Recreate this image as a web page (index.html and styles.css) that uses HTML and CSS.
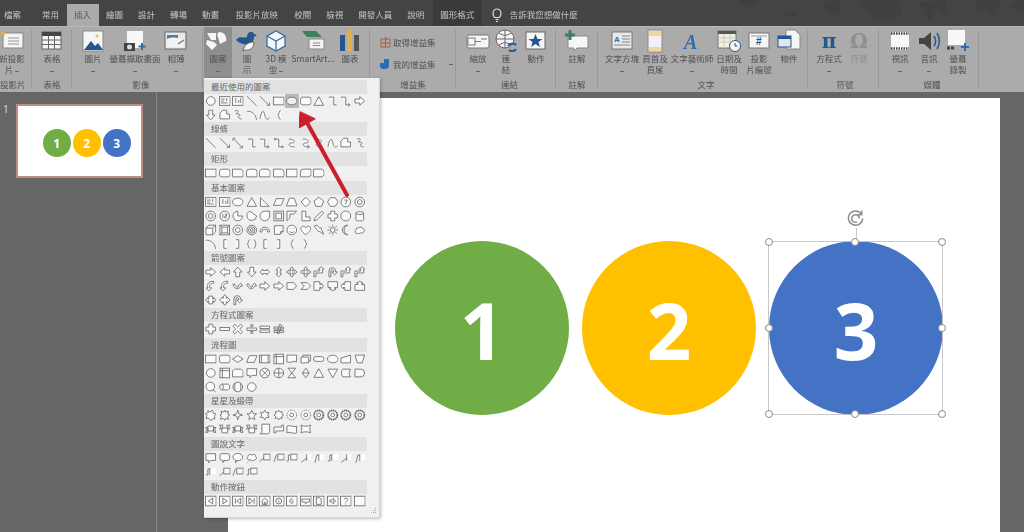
FILE: index.html
```html
<!DOCTYPE html>
<html lang="zh-Hant">
<head>
<meta charset="utf-8">
<title>PowerPoint</title>
<link rel="stylesheet" href="styles.css">
</head>
<body>
<svg class="defs" aria-hidden="true">
  <symbol id="oval" viewBox="0 0 12 12"><ellipse cx="6" cy="6" rx="4.5" ry="4.5"/></symbol>
  <symbol id="ell" viewBox="0 0 12 12"><ellipse cx="6" cy="6" rx="5.5" ry="4"/></symbol>
  <symbol id="rect" viewBox="0 0 12 12"><rect x=".5" y="2" width="11" height="8"/></symbol>
  <symbol id="rnd" viewBox="0 0 12 12"><rect x=".5" y="2" width="11" height="8" rx="2.5"/></symbol>
  <symbol id="txt" viewBox="0 0 12 12"><rect x=".5" y="1.5" width="11" height="9"/><path d="M2 4h4M2 6h3M2 8h7M8 3v3"/></symbol>
  <symbol id="txv" viewBox="0 0 12 12"><rect x=".5" y="1.5" width="11" height="9"/><path d="M4 8V3M7 8V5M9 8V3"/></symbol>
  <symbol id="line" viewBox="0 0 12 12"><path d="M1 1l10 10"/></symbol>
  <symbol id="arr" viewBox="0 0 12 12"><path d="M1 1l9.500 9.500M8 10.500h3v-3"/></symbol>
  <symbol id="dbl" viewBox="0 0 12 12"><path d="M2 2l8 8M1 3.500V1h2.500M8 11h3V8.500"/></symbol>
  <symbol id="elb" viewBox="0 0 12 12"><path d="M2 2h5v8h3"/></symbol>
  <symbol id="ela" viewBox="0 0 12 12"><path d="M1 2h5v8h4M8.500 8.500l2 1.500-2 1.500"/></symbol>
  <symbol id="eld" viewBox="0 0 12 12"><path d="M2 2h4v8h4M1 1l2 1-2 1M9 9l2 1-2 1"/></symbol>
  <symbol id="crv" viewBox="0 0 12 12"><path d="M3 2c7 0 7 4 3 4s-4 4 3 4"/></symbol>
  <symbol id="cra" viewBox="0 0 12 12"><path d="M3 2c7 0 7 4 3 4s-4 4 3 4M7.500 8.500l2.500 1.500-2.500 1.500"/></symbol>
  <symbol id="tri" viewBox="0 0 12 12"><path d="M6 1.500l5 9H1z"/></symbol>
  <symbol id="rtri" viewBox="0 0 12 12"><path d="M1.500 1.500l9 9h-9z"/></symbol>
  <symbol id="ra" viewBox="0 0 12 12"><path d="M1 4h5V1.500L11 6l-5 4.500V8H1z"/></symbol>
  <symbol id="la" viewBox="0 0 12 12"><path d="M11 4H6V1.500L1 6l5 4.500V8h5z"/></symbol>
  <symbol id="ua" viewBox="0 0 12 12"><path d="M4 11V6H1.500L6 1l4.500 5H8v5z"/></symbol>
  <symbol id="da" viewBox="0 0 12 12"><path d="M4 1v5H1.500L6 11l4.500-5H8V1z"/></symbol>
  <symbol id="lra" viewBox="0 0 12 12"><path d="M1 6l3-3v1.500h4V3l3 3-3 3V7.500H4V9z"/></symbol>
  <symbol id="uda" viewBox="0 0 12 12"><path d="M6 1l3 3H7.500v4H9l-3 3-3-3h1.500V4H3z"/></symbol>
  <symbol id="qua" viewBox="0 0 12 12"><path d="M6 .5L8 3H7v2h2V4l2.500 2L9 8V7H7v2h1l-2 2.500L4 9h1V7H3v1L.5 6 3 4v1h2V3H4z"/></symbol>
  <symbol id="bent" viewBox="0 0 12 12"><path d="M1 11V5h6V3H5.500L8.500 .5 11.500 3H10v4H3v4z"/></symbol>
  <symbol id="uturn" viewBox="0 0 12 12"><path d="M2 11V5a3.500 3.500 0 017 0v1h2l-3 3-3-3h2V5a1.500 1.500 0 00-3 0v6z"/></symbol>
  <symbol id="cca" viewBox="0 0 12 12"><path d="M9 1C3 1 2 5 3 8l-2 0 3 3 3-3-2 0C4 6 5 3 9 3z"/></symbol>
  <symbol id="cua" viewBox="0 0 12 12"><path d="M1 4c1 6 7 6 8 2h2L9 3 6 6h1C6 8 4 8 3 4z"/></symbol>
  <symbol id="pent" viewBox="0 0 12 12"><path d="M1 2.500h7L11 6 8 9.500H1z"/></symbol>
  <symbol id="chev" viewBox="0 0 12 12"><path d="M1 2.500h6.500L11 6 7.500 9.500H1L4.500 6z"/></symbol>
  <symbol id="rcal" viewBox="0 0 12 12"><path d="M1 1.500h6v3h1.500V3L11 6 8.500 9V7.500H7v3H1z"/></symbol>
  <symbol id="dcal" viewBox="0 0 12 12"><path d="M1 1.500h10v6H8V9h1.500L6 11 2.500 9H4V7.500H1z"/></symbol>
  <symbol id="lcal" viewBox="0 0 12 12"><path d="M11 1.500H5v3H3.500V3L1 6l2.500 3V7.500H5v3h6z"/></symbol>
  <symbol id="ucal" viewBox="0 0 12 12"><path d="M1 10.500h10v-6H8V3h1.500L6 1 2.500 3H4v1.500H1z"/></symbol>
  <symbol id="lrcal" viewBox="0 0 12 12"><path d="M4 2h4v3h1V3.500L11.500 6 9 8.500V7H8v3H4V7H3v1.500L.5 6 3 3.500V5h1z"/></symbol>
  <symbol id="qcal" viewBox="0 0 12 12"><path d="M6 .5L8 3H7.500v1h1V3L11.500 6l-3 3V8h-1v1H8l-2 2.500L4 9h.5V8h-1v1L.5 6l3-3v1h1V3H4z"/></symbol>
  <symbol id="para" viewBox="0 0 12 12"><path d="M3.500 2.500h8L8.500 9.500h-8z"/></symbol>
  <symbol id="trap" viewBox="0 0 12 12"><path d="M3.500 2h5l3 8H.5z"/></symbol>
  <symbol id="dia" viewBox="0 0 12 12"><path d="M6 1l5 5-5 5-5-5z"/></symbol>
  <symbol id="fdia" viewBox="0 0 12 12"><path d="M6 2.500L11.500 6 6 9.500.5 6z"/></symbol>
  <symbol id="pgn" viewBox="0 0 12 12"><path d="M6 1l5 4-2 5.500H3L1 5z"/></symbol>
  <symbol id="hex" viewBox="0 0 12 12"><path d="M3.500 1.500h5L11.500 6l-3 4.500h-5L.5 6z"/></symbol>
  <symbol id="oct" viewBox="0 0 12 12"><path d="M4 1h4l3 3v4l-3 3H4L1 8V4z"/></symbol>
  <symbol id="n7" viewBox="0 0 12 12"><circle cx="6" cy="6" r="5"/><path d="M4.500 4h3L5.500 8.500"/></symbol>
  <symbol id="n8" viewBox="0 0 12 12"><circle cx="6" cy="6" r="5"/><circle cx="6" cy="6" r="2.500"/></symbol>
  <symbol id="n12" viewBox="0 0 12 12"><circle cx="6" cy="6" r="5"/><path d="M4 4v4M6 4h2v2H6v2h2"/></symbol>
  <symbol id="pie" viewBox="0 0 12 12"><path d="M6 6V1a5 5 0 105 5z"/></symbol>
  <symbol id="cho" viewBox="0 0 12 12"><path d="M4 1a5 5 0 107 5z"/></symbol>
  <symbol id="tear" viewBox="0 0 12 12"><path d="M11 1v5a5 5 0 11-5-5z"/></symbol>
  <symbol id="frm" viewBox="0 0 12 12"><rect x="1" y="1" width="10" height="10"/><rect x="3" y="3" width="6" height="6"/></symbol>
  <symbol id="half" viewBox="0 0 12 12"><path d="M1 1h10L8 4H4v4l-3 3z"/></symbol>
  <symbol id="corner" viewBox="0 0 12 12"><path d="M2 1h4v6h4.500v4H2z"/></symbol>
  <symbol id="pen" viewBox="0 0 12 12"><path d="M1 11l1-3L9 1l2 2-7 7z"/></symbol>
  <symbol id="plus" viewBox="0 0 12 12"><path d="M4 1h4v3h3v4H8v3H4V8H1V4h3z"/></symbol>
  <symbol id="can" viewBox="0 0 12 12"><path d="M2 3v7c0 1.500 8 1.500 8 0V3M2 3c0-2 8-2 8 0s-8 2-8 0z"/></symbol>
  <symbol id="cube" viewBox="0 0 12 12"><path d="M1 4l3-3h7v7l-3 3H1zM1 4h7v7M8 4l3-3"/></symbol>
  <symbol id="bev" viewBox="0 0 12 12"><rect x="1" y="1" width="10" height="10"/><rect x="3" y="3" width="6" height="6"/><path d="M1 1l2 2M11 1L9 3M1 11l2-2M11 11L9 9"/></symbol>
  <symbol id="donut" viewBox="0 0 12 12"><circle cx="6" cy="6" r="5"/><circle cx="6" cy="6" r="2.500"/></symbol>
  <symbol id="spir" viewBox="0 0 12 12"><circle cx="6" cy="6" r="5"/><circle cx="6" cy="6" r="3.300"/><circle cx="6" cy="6" r="1.500"/></symbol>
  <symbol id="arch" viewBox="0 0 12 12"><path d="M1 8a5 5 0 0110 0H9a3 3 0 00-6 0z"/></symbol>
  <symbol id="fold" viewBox="0 0 12 12"><path d="M1.500 1.500h9v6l-3 3h-6zM7.500 10.500l.5-3h2.500"/></symbol>
  <symbol id="smile" viewBox="0 0 12 12"><circle cx="6" cy="6" r="5"/><path d="M3.500 7.500c1 1.500 4 1.500 5 0M4 4.500h.5M7.500 4.500H8"/></symbol>
  <symbol id="heart" viewBox="0 0 12 12"><path d="M6 11C1 7 .5 5 1 3.500 2 1.500 5 1.500 6 4c1-2.500 4-2.500 5-.5.500 1.500 0 3.500-5 7.500z"/></symbol>
  <symbol id="bolt" viewBox="0 0 12 12"><path d="M1 2l3-1 3 3 1-.5 3 7-4-3-1 .5z"/></symbol>
  <symbol id="sun" viewBox="0 0 12 12"><circle cx="6" cy="6" r="2.500"/><path d="M6 .5v2M6 9.500v2M.5 6h2M9.500 6h2M2 2l1.500 1.500M8.500 8.500L10 10M10 2L8.500 3.500M2 10l1.500-1.500"/></symbol>
  <symbol id="moon" viewBox="0 0 12 12"><path d="M8 1C3 2 3 10 8 11 5 11 2.500 9 2.500 6S5 1 8 1z"/></symbol>
  <symbol id="cloud" viewBox="0 0 12 12"><path d="M3 9.500C1 9.500.5 7 2 6.500 1.500 4 4 3 5 4c1-1.500 3.500-1.500 4 .5 2 0 2.500 3 1 3.500-.5 1.500-2.500 1.500-3 .8-1 1-3 1-4 .7z"/></symbol>
  <symbol id="arc" viewBox="0 0 12 12"><path d="M1 2c5 0 9 3 10 9"/></symbol>
  <symbol id="bb" viewBox="0 0 12 12"><path d="M3.500 1.500C1 1.500 1 10.500 3.500 10.500M8.500 1.500C11 1.500 11 10.500 8.500 10.500"/></symbol>
  <symbol id="bc" viewBox="0 0 12 12"><path d="M4 1.500c-2 0-1 3.500-2.500 4.500C3 7 2 10.500 4 10.500M8 1.500c2 0 1 3.500 2.500 4.500C9 7 10 10.500 8 10.500"/></symbol>
  <symbol id="lb" viewBox="0 0 12 12"><path d="M8 1.500H5v9h3"/></symbol>
  <symbol id="rb" viewBox="0 0 12 12"><path d="M4 1.500h3v9H4"/></symbol>
  <symbol id="lc" viewBox="0 0 12 12"><path d="M8 1.500c-2.500 0-1 3.500-3 4.500 2 1 .5 4.500 3 4.500"/></symbol>
  <symbol id="rc" viewBox="0 0 12 12"><path d="M4 1.500c2.500 0 1 3.500 3 4.500-2 1-.5 4.500-3 4.500"/></symbol>
  <symbol id="wav" viewBox="0 0 12 12"><path d="M1 10C3 0 5 1 6 6s3 5 5 3"/></symbol>
  <symbol id="free" viewBox="0 0 12 12"><path d="M1 10V4l3-3h4v4h3v5z"/></symbol>
  <symbol id="scr" viewBox="0 0 12 12"><path d="M3 2c3-2 5 1 2 2-3 2 5 0 3 3-1 2-3 0-1 2 1 1 2 1 3 1"/></symbol>
  <symbol id="snip" viewBox="0 0 12 12"><path d="M.5 2h9l2 2v6H.5z"/></symbol>
  <symbol id="snp2" viewBox="0 0 12 12"><path d="M2.500 2h7l2 2v6H.5V4z"/></symbol>
  <symbol id="snp3" viewBox="0 0 12 12"><path d="M.5 2h9l2 2v4l-2 2H.5z"/></symbol>
  <symbol id="rnd1" viewBox="0 0 12 12"><path d="M.5 2h8a3 3 0 013 3v5H.5z"/></symbol>
  <symbol id="rnd2" viewBox="0 0 12 12"><path d="M3.500 2h5a3 3 0 013 3v5H.5V5a3 3 0 013-3z"/></symbol>
  <symbol id="rnd3" viewBox="0 0 12 12"><path d="M3.500 2h8v5a3 3 0 01-3 3h-8V5a3 3 0 013-3z"/></symbol>
  <symbol id="minus" viewBox="0 0 12 12"><rect x="1" y="4.500" width="10" height="3"/></symbol>
  <symbol id="mult" viewBox="0 0 12 12"><path d="M3 1l3 3 3-3 2 2-3 3 3 3-2 2-3-3-3 3-2-2 3-3-3-3z"/></symbol>
  <symbol id="div" viewBox="0 0 12 12"><path d="M1 5h10v2.500H1zM5 1.500h2v2H5zM5 8.500h2v2H5z"/></symbol>
  <symbol id="eq" viewBox="0 0 12 12"><path d="M1 3h10v2.500H1zM1 7h10v2.500H1z"/></symbol>
  <symbol id="neq" viewBox="0 0 12 12"><path d="M1 4h10v2H1zM1 7.500h10v2H1zM7 1l2 1-3 9-2-1z"/></symbol>
  <symbol id="fpr" viewBox="0 0 12 12"><rect x=".5" y="2" width="11" height="8"/><path d="M2.500 2v8M9.500 2v8"/></symbol>
  <symbol id="fst" viewBox="0 0 12 12"><rect x="1" y="1" width="10" height="10"/><path d="M1 3.500h10M3.500 1v10"/></symbol>
  <symbol id="doc" viewBox="0 0 12 12"><path d="M1 2h10v7c-3-2-6 2-10 0z"/></symbol>
  <symbol id="mdoc" viewBox="0 0 12 12"><path d="M1 4h8v6c-2-1-5 1-8 0zM3 4V2h8v6H9"/></symbol>
  <symbol id="term" viewBox="0 0 12 12"><rect x=".5" y="3.500" width="11" height="5" rx="2.500"/></symbol>
  <symbol id="mi" viewBox="0 0 12 12"><path d="M1 5l10-3v8H1z"/></symbol>
  <symbol id="ml" viewBox="0 0 12 12"><path d="M1 2h10l-2.500 8h-5z"/></symbol>
  <symbol id="sj" viewBox="0 0 12 12"><circle cx="6" cy="6" r="5"/><path d="M2.500 2.500l7 7M9.500 2.500l-7 7"/></symbol>
  <symbol id="or" viewBox="0 0 12 12"><circle cx="6" cy="6" r="5"/><path d="M1 6h10M6 1v10"/></symbol>
  <symbol id="col" viewBox="0 0 12 12"><path d="M2 1h8L2 11h8z"/></symbol>
  <symbol id="srt" viewBox="0 0 12 12"><path d="M6 1l3.500 5L6 11 2.500 6zM2.500 6h7"/></symbol>
  <symbol id="mrg" viewBox="0 0 12 12"><path d="M1 2h10l-5 9z"/></symbol>
  <symbol id="sto" viewBox="0 0 12 12"><path d="M3 2h8C9 4 9 8 11 10H3C1 8 1 4 3 2z"/></symbol>
  <symbol id="dly" viewBox="0 0 12 12"><path d="M1 2h6a4 4 0 010 8H1z"/></symbol>
  <symbol id="mag" viewBox="0 0 12 12"><circle cx="5.500" cy="5.500" r="4.500"/><path d="M8 9l3 2"/></symbol>
  <symbol id="dsk" viewBox="0 0 12 12"><path d="M3 3h6c3 0 3 6 0 6H3C0 9 0 3 3 3zM3 3c2 0 2 6 0 6"/></symbol>
  <symbol id="dis" viewBox="0 0 12 12"><circle cx="6" cy="6" r="5"/><path d="M3.500 1.800c-1 2.500-1 6 0 8.400M8.500 1.800c1 2.500 1 6 0 8.400"/></symbol>
  <symbol id="s4" viewBox="0 0 12 12"><path d="M6 1l1.200 3.800L11 6 7.200 7.200 6 11 4.800 7.200 1 6l3.800-1.200z"/></symbol>
  <symbol id="s5" viewBox="0 0 12 12"><path d="M6 1l1.500 3.500 3.500.3-2.700 2.400.8 3.600L6 8.900l-3.100 1.900.8-3.600L1 4.800l3.500-.3z"/></symbol>
  <symbol id="s6" viewBox="0 0 12 12"><path d="M6 1l1.500 2.500h3L9 6l1.500 2.500h-3L6 11 4.500 8.500h-3L3 6 1.500 3.500h3z"/></symbol>
  <symbol id="s8" viewBox="0 0 12 12"><path d="M6 1l1.300 1.800 2.200-.3-.3 2.200L11 6 9.200 7.300l.3 2.200-2.200-.3L6 11 4.700 9.200l-2.200.3.3-2.200L1 6l1.800-1.300-.3-2.200 2.200.3z"/></symbol>
  <symbol id="b1" viewBox="0 0 12 12"><path d="M3 1l2 2 3-2 .5 3 3 1-2 2 1 3-3 0-1.500 2L4 9.500l-3 0 1-3-1.500-2 3-1z"/></symbol>
  <symbol id="b2" viewBox="0 0 12 12"><path d="M6 1l1 2 3-1-1 3 2 1-2 1.500 1 3-3-1-1 2-1.500-2-3 1 1-3L1 6l2-1-1-3 3 1z"/></symbol>
  <symbol id="ring" viewBox="0 0 12 12"><circle cx="6" cy="6" r="5" stroke-dasharray="1.500 .8"/><circle cx="6" cy="6" r="2"/></symbol>
  <symbol id="ring2" viewBox="0 0 12 12"><circle cx="6" cy="6" r="4.800" stroke-width="1.800" stroke-dasharray="1.500 .5"/><circle cx="6" cy="6" r="2"/></symbol>
  <symbol id="rib" viewBox="0 0 12 12"><path d="M3 3h6v5H3zM3 4.500H.5L2 7 .5 9.500H3zM9 4.500h2.500L10 7l1.500 2.500H9z"/></symbol>
  <symbol id="rib2" viewBox="0 0 12 12"><path d="M3 5h6v5H3zM3 6H.5L2 4 .5 2H4zM9 6h2.500L10 4l1.500-2H8z"/></symbol>
  <symbol id="scro" viewBox="0 0 12 12"><path d="M3 1h8v8c0 1-1 2-2 2H1c1 0 2-1 2-2z"/></symbol>
  <symbol id="scrh" viewBox="0 0 12 12"><path d="M1 4h8V2h2v6H3v2H1z"/></symbol>
  <symbol id="wave2" viewBox="0 0 12 12"><path d="M1 3c3-2 7 2 10 0v7c-3 2-7-2-10 0z"/></symbol>
  <symbol id="wave3" viewBox="0 0 12 12"><path d="M1 2c3 1.500 7 1.500 10 0-1 3-1 5 0 8-3-1.500-7-1.500-10 0 1-3 1-5 0-8z"/></symbol>
  <symbol id="c1" viewBox="0 0 12 12"><path d="M1 1.500h10v7H6L4 11V8.500H1z"/></symbol>
  <symbol id="c2" viewBox="0 0 12 12"><rect x="1" y="1.500" width="10" height="7" rx="2"/><path d="M4 8.500V11l2-2.500"/></symbol>
  <symbol id="c3" viewBox="0 0 12 12"><ellipse cx="6" cy="5" rx="5" ry="3.800"/><path d="M4 8.500L3.500 11 6 8.800"/></symbol>
  <symbol id="c4" viewBox="0 0 12 12"><path d="M3 8C1 8 .5 5 2 4.500 2 2 5 1.500 6 3c1.500-1.500 4-1 4 1.500 1.500 1 1 3.500-1 3.500-1 1-3 1-4 0zM3 9.500h.8M1.500 11h.5"/></symbol>
  <symbol id="c5" viewBox="0 0 12 12"><rect x="5" y="2" width="6.500" height="6"/><path d="M5 6L.5 10"/></symbol>
  <symbol id="c6" viewBox="0 0 12 12"><rect x="5" y="2" width="6.500" height="6"/><path d="M5 3H3.500L1 10"/></symbol>
  <symbol id="c7" viewBox="0 0 12 12"><rect x="5" y="2" width="6.500" height="6"/><path d="M5 3H2.500v6H.5"/></symbol>
  <symbol id="c8" viewBox="0 0 12 12"><rect x="7" y="2" width="4.500" height="6" fill="#fff" stroke="none"/><path d="M7 2v7M7 6L1.500 10.500"/></symbol>
  <symbol id="c9" viewBox="0 0 12 12"><rect x="6" y="2" width="5.500" height="6" fill="#fff" stroke="none"/><path d="M6 2v7M6 3H4L2 11"/></symbol>
  <symbol id="c10" viewBox="0 0 12 12"><rect x="5" y="2" width="6.500" height="6" fill="#fff" stroke="none"/><path d="M5 2v7M5 3H3v6H1"/></symbol>
  <symbol id="a1" viewBox="0 0 12 12"><rect x=".5" y="1" width="11" height="10"/><path d="M8 3L3.500 6 8 9z"/></symbol>
  <symbol id="a2" viewBox="0 0 12 12"><rect x=".5" y="1" width="11" height="10"/><path d="M4 3l4.500 3L4 9z"/></symbol>
  <symbol id="a3" viewBox="0 0 12 12"><rect x=".5" y="1" width="11" height="10"/><path d="M9 3L5 6l4 3zM3.500 3v6"/></symbol>
  <symbol id="a4" viewBox="0 0 12 12"><rect x=".5" y="1" width="11" height="10"/><path d="M3 3l4 3-4 3zM8.500 3v6"/></symbol>
  <symbol id="a5" viewBox="0 0 12 12"><rect x=".5" y="1" width="11" height="10"/><path d="M2.500 6L6 3l3.500 3M3.500 6v3.500h5V6M5.500 9.500V7.500h1.200v2"/></symbol>
  <symbol id="a6" viewBox="0 0 12 12"><rect x=".5" y="1" width="11" height="10"/><circle cx="6" cy="6" r="3"/><path d="M6 5.500v2M6 4v.5"/></symbol>
  <symbol id="a7" viewBox="0 0 12 12"><rect x=".5" y="1" width="11" height="10"/><path d="M7 4c-1.500-1-3 0-3 2s2 3 3 2 0-3-1.500-2"/></symbol>
  <symbol id="a8" viewBox="0 0 12 12"><rect x=".5" y="1" width="11" height="10"/><path d="M2 4h8v3H7L6 9 5 7H2z"/></symbol>
  <symbol id="a9" viewBox="0 0 12 12"><rect x=".5" y="1" width="11" height="10"/><path d="M3.500 2.500h3.500l1.500 1.500v5.500h-5z"/></symbol>
  <symbol id="a10" viewBox="0 0 12 12"><rect x=".5" y="1" width="11" height="10"/><path d="M3 5v2h1.500L7 9V3L4.500 5zM8.500 5v2"/></symbol>
  <symbol id="a11" viewBox="0 0 12 12"><rect x=".5" y="1" width="11" height="10"/><path d="M4.500 4.500C4.500 2.500 8 2.500 8 4.500 8 6 6 5.800 6 7.500M6 8.500v1"/></symbol>
  <symbol id="a12" viewBox="0 0 12 12"><rect x=".5" y="1" width="11" height="10"/></symbol>
</svg>

<header class="tabs">
  <span class="tab tab-file">檔案</span>
  <span class="tab">常用</span>
  <span class="tab tab-on">插入</span>
  <span class="tab">繪圖</span>
  <span class="tab">設計</span>
  <span class="tab">轉場</span>
  <span class="tab">動畫</span>
  <span class="tab tab-gap">投影片放映</span>
  <span class="tab">校閱</span>
  <span class="tab">檢視</span>
  <span class="tab">開發人員</span>
  <span class="tab">說明</span>
  <span class="tab tab-ctx">圖形格式</span>
  <svg class="bulb" viewBox="0 0 12 16"><path d="M3.500 10.500C1 8 1.500 2 6 2s5 6 2.500 8.500zM4.500 12.500h3M5 14.500h2"/></svg>
  <span class="tell">告訴我您想做什麼</span>
  <svg class="deco" viewBox="0 0 300 26"><path d="M15 0c5 8 14 9 20 0zM62 14l6 6 5-8zM98 2c4 14 14 18 20 6l-4-8zM135 0c3 8 9 18 30 20 14 0 16-12 8-20zM195 3l10 18 8-12 12 10-4-19zM250 0l4 12 10-3 6 10 8-19zM287 4c2 6 6 8 13 5V0z"/></svg>
</header>

<section class="ribbon">
  <div class="group g1">
    <div class="btns">
      <div class="btn w24">
        <svg class="ico" viewBox="0 0 26 24"><rect x="4" y="4" width="20" height="15" fill="#f4f4f4" stroke="#888"/><path d="M9 9h11M9 12h11M9 15h11" stroke="#999"/><path d="M4 1l1 2 2 .5-1.500 1.500.5 2-2-1-2 1 .5-2L1 3.500 3 3z" fill="#e0b050"/></svg>
        <span class="lbl">新投影<br>片 <i class="car"></i></span>
      </div>
    </div>
    <div class="gtitle">投影片</div>
  </div>
  <div class="group g2">
    <div class="btns">
      <div class="btn w40">
        <svg class="ico" viewBox="0 0 26 24"><rect x="3" y="3" width="19" height="17" fill="#f4f4f4" stroke="#666"/><rect x="3" y="3" width="19" height="4" fill="#444"/><path d="M3 11h19M3 15.500h19M9.500 7v13M15.500 7v13" stroke="#666"/></svg>
        <span class="lbl">表格<br><i class="car"></i></span>
      </div>
    </div>
    <div class="gtitle">表格</div>
  </div>
  <div class="group g3">
    <div class="btns">
      <div class="btn w28">
        <svg class="ico" viewBox="0 0 26 24"><rect x="3" y="2" width="20" height="20" fill="#f6f6f6" stroke="#888"/><path d="M4 21l7-9 4 5 3-3 5 7z" fill="#24568f"/><circle cx="17" cy="7" r="1.500" fill="#e8c060"/></svg>
        <span class="lbl">圖片<br><i class="car"></i></span>
      </div>
      <div class="btn w56">
        <svg class="ico" viewBox="0 0 26 24"><rect x="5" y="2" width="16" height="17" fill="#f8f8f8"/><rect x="2" y="14" width="11" height="8" fill="#444"/><circle cx="7.500" cy="18" r="2.500" fill="#ddd"/><path d="M20 14v7M16.500 17.500h7" stroke="#2e6bb0" stroke-width="2"/></svg>
        <span class="lbl">螢幕擷取畫面<br><i class="car"></i></span>
      </div>
      <div class="btn w26">
        <svg class="ico" viewBox="0 0 26 24"><rect x="2" y="3" width="21" height="17" fill="#e8e8e8" stroke="#666"/><rect x="4" y="6" width="11" height="8" fill="#4a7fa5"/><path d="M4 10c6-3 12-1 17 0v8H4z" fill="#f2f2f2"/><path d="M15 15l6-4" stroke="#777" stroke-width="1.500"/></svg>
        <span class="lbl">相簿<br><i class="car"></i></span>
      </div>
    </div>
    <div class="gtitle">影像</div>
  </div>
  <div class="group g4">
    <div class="btns">
      <div class="btn w28 btn-on">
        <svg class="ico" viewBox="0 0 26 24"><path d="M2 11l7 2 3 3-5 5-6-6z" fill="#f6f6f6"/><path d="M14 3a7 7 0 017 9l-6 3-3-10z" fill="#f6f6f6"/><path d="M2 4h9v7H6z" fill="#f6f6f6"/></svg>
        <span class="lbl">圖案<br><i class="car"></i></span>
      </div>
      <div class="btn w30">
        <svg class="ico" viewBox="0 0 26 24"><path d="M2 11c4-5 8-1 11-3 0-5 5-7 7-3l3 1-3 2c0 6-5 9-11 7-3-1-5-2-7-4z" fill="#24568f"/><path d="M9 22c1-6 5-9 11-9 0 6-4 9-9 8z" fill="#f6f6f6" stroke="#666"/></svg>
        <span class="lbl">圖<br>示</span>
      </div>
      <div class="btn w28">
        <svg class="ico" viewBox="0 0 26 24"><path d="M13 2l9 5v10l-9 5-9-5V7z" fill="#f6f6f6" stroke="#3a6ea5" stroke-width="1.300"/><path d="M4 7l9 5 9-5M13 12v10" fill="none" stroke="#3a6ea5" stroke-width="1.300"/></svg>
        <span class="lbl">3D 模<br>型 <i class="car"></i></span>
      </div>
      <div class="btn w46">
        <svg class="ico" viewBox="0 0 26 24"><path d="M2 2h14l6 6H7z" fill="#3d8060"/><rect x="9" y="10" width="15" height="10" fill="#f2f2f2" stroke="#888"/><path d="M13 14h7M13 16.500h7" stroke="#888"/></svg>
        <span class="lbl">SmartArt...</span>
      </div>
      <div class="btn w28">
        <svg class="ico" viewBox="0 0 26 24"><rect x="3" y="6" width="5" height="16" fill="#24568f"/><rect x="10" y="1" width="5" height="21" fill="#e0b050"/><rect x="17" y="6" width="5" height="16" fill="#555"/></svg>
        <span class="lbl">圖表</span>
      </div>
    </div>
    <div class="gtitle">圖例</div>
  </div>
  <div class="group g5">
    <div class="addins">
      <div class="addin">
        <svg class="ico-s" viewBox="0 0 12 12"><path d="M2 3h9v8H2zM6.500 1v10M2 7h9" fill="none" stroke="#b05a3c"/></svg>
        <span>取得增益集</span>
      </div>
      <div class="addin">
        <svg class="ico-s" viewBox="0 0 12 12"><path d="M5 1h5v6a4 4 0 01-4 4H3L1 9V5h4z" fill="#2e6bb0"/></svg>
        <span>我的增益集</span><i class="car car-far"></i>
      </div>
    </div>
    <div class="gtitle">增益集</div>
  </div>
  <div class="group g6">
    <div class="btns">
      <div class="btn w30">
        <svg class="ico" viewBox="0 0 26 24"><rect x="2" y="6" width="22" height="13" rx="2" fill="#f6f6f6" stroke="#777"/><rect x="3" y="9" width="7" height="7" fill="#f6f6f6" stroke="#777"/><path d="M10 12.500h6M16 10h6" stroke="#777"/></svg>
        <span class="lbl">縮放<br><i class="car"></i></span>
      </div>
      <div class="btn w26">
        <svg class="ico" viewBox="0 0 26 24"><circle cx="12" cy="10" r="9" fill="#f6f6f6" stroke="#666"/><path d="M3 10h18M12 1v18M6 4c4 3 8 3 12 0M6 16c4-3 8-3 12 0" fill="none" stroke="#666"/><path d="M15 17c2-3 6-3 8-1M16 21c2 2 6 1 7-1" fill="none" stroke="#24568f" stroke-width="2"/></svg>
        <span class="lbl">連<br>結</span>
      </div>
      <div class="btn w34">
        <svg class="ico" viewBox="0 0 26 24"><rect x="3" y="3" width="19" height="17" fill="#f6f6f6" stroke="#666"/><path d="M12.500 5l2 5h5l-4 3 1.500 5-4.500-3-4.500 3 1.500-5-4-3h5z" fill="#24568f"/></svg>
        <span class="lbl">動作</span>
      </div>
    </div>
    <div class="gtitle">連結</div>
  </div>
  <div class="group g7">
    <div class="btns">
      <div class="btn w42">
        <svg class="ico" viewBox="0 0 26 24"><path d="M4 7h20v12H13l-3 3v-3H4z" fill="#f6f6f6" stroke="#888"/><path d="M6 1v10M1 6h10" stroke="#3d8060" stroke-width="3"/></svg>
        <span class="lbl">註解</span>
      </div>
    </div>
    <div class="gtitle">註解</div>
  </div>
  <div class="group g8">
    <div class="btns">
      <div class="btn w36">
        <svg class="ico" viewBox="0 0 26 24"><rect x="3" y="3" width="20" height="17" fill="#e8e8e8" stroke="#777"/><text x="5" y="13" class="ia">A</text><path d="M13 7h8M13 10h8M13 13h8M5 16h16" stroke="#888"/></svg>
        <span class="lbl">文字方塊<br><i class="car"></i></span>
      </div>
      <div class="btn w30">
        <svg class="ico" viewBox="0 0 26 24"><rect x="6" y="1" width="14" height="22" fill="#f2f2f2" stroke="#888"/><rect x="7" y="2" width="12" height="5" fill="#ecd9a0"/><rect x="7" y="18" width="12" height="4" fill="#ecd9a0"/></svg>
        <span class="lbl">頁首及<br>頁尾</span>
      </div>
      <div class="btn w44">
        <svg class="ico ico-tall" viewBox="0 0 26 24"><text x="5" y="20" class="iw">A</text></svg>
        <span class="lbl">文字藝術師<br><i class="car"></i></span>
      </div>
      <div class="btn w30">
        <svg class="ico" viewBox="0 0 26 24"><rect x="2" y="2" width="18" height="17" fill="#f2efe2" stroke="#777"/><rect x="2" y="2" width="18" height="3" fill="#555"/><path d="M2 9h18M2 13h18M8 5v14M14 5v14" stroke="#ccb"/><circle cx="19" cy="17" r="5.500" fill="#f6f6f6" stroke="#24568f"/><path d="M19 14v3h2.500" fill="none" stroke="#444"/></svg>
        <span class="lbl">日期及<br>時間</span>
      </div>
      <div class="btn w30">
        <svg class="ico" viewBox="0 0 26 24"><rect x="3" y="4" width="20" height="15" fill="#f6f6f6" stroke="#777"/><text x="10" y="16" class="ih">#</text><path d="M5 7h16" stroke="#999"/></svg>
        <span class="lbl">投影<br>片編號</span>
      </div>
      <div class="btn w30">
        <svg class="ico" viewBox="0 0 26 24"><path d="M10 1h9l5 5v14H10z" fill="#f6f6f6" stroke="#888"/><rect x="2" y="7" width="13" height="11" fill="#dfe7ef" stroke="#24568f"/><rect x="2" y="7" width="13" height="3" fill="#24568f"/></svg>
        <span class="lbl">物件</span>
      </div>
    </div>
    <div class="gtitle">文字</div>
  </div>
  <div class="group g9">
    <div class="btns">
      <div class="btn w36">
        <span class="glyph glyph-pi">π</span>
        <span class="lbl">方程式<br><i class="car"></i></span>
      </div>
      <div class="btn w24 btn-off">
        <span class="glyph glyph-om">Ω</span>
        <span class="lbl">符號</span>
      </div>
    </div>
    <div class="gtitle">符號</div>
  </div>
  <div class="group g10">
    <div class="btns">
      <div class="btn w30">
        <svg class="ico" viewBox="0 0 26 24"><rect x="4" y="3" width="18" height="18" fill="#f8f8f8"/><path d="M4 4.500h18M4 19.500h18" stroke="#444" stroke-width="2.500" stroke-dasharray="1.500 1"/></svg>
        <span class="lbl">視訊<br><i class="car"></i></span>
      </div>
      <div class="btn w28">
        <svg class="ico" viewBox="0 0 26 24"><path d="M3 9h5l7-6v18l-7-6H3z" fill="#444"/><path d="M18 7c2 3 2 7 0 10M21 4c3 5 3 11 0 16" fill="none" stroke="#24568f" stroke-width="1.500"/></svg>
        <span class="lbl">音訊<br><i class="car"></i></span>
      </div>
      <div class="btn w30">
        <svg class="ico" viewBox="0 0 26 24"><rect x="3" y="1" width="17" height="15" fill="#f8f8f8"/><path d="M2 19h8" stroke="#444" stroke-width="3" stroke-dasharray="3 1"/><path d="M20 14v8M16 18h8" stroke="#2e6bb0" stroke-width="2"/></svg>
        <span class="lbl">螢幕<br>錄製</span>
      </div>
    </div>
    <div class="gtitle">媒體</div>
  </div>
</section>

<main class="work">
  <aside class="side">
    <span class="num">1</span>
    <div class="thumb">
      <div class="tc tc-g">1</div>
      <div class="tc tc-y">2</div>
      <div class="tc tc-b">3</div>
    </div>
  </aside>
  <div class="editor">
    <div class="slide">
      <div class="shape sh-g">1</div>
      <div class="shape sh-y">2</div>
      <div class="shape sh-b">3
        <div class="sel">
          <svg class="rot" viewBox="0 0 20 20"><path d="M15 5a7.500 7.500 0 101.500 5M15.500 1.500V6H11M13 10a4 4 0 10-2.500 3.700"/></svg>
          <i class="stem"></i>
          <i class="h h-tl"></i><i class="h h-tc"></i><i class="h h-tr"></i>
          <i class="h h-ml"></i><i class="h h-mr"></i>
          <i class="h h-bl"></i><i class="h h-bc"></i><i class="h h-br"></i>
        </div>
      </div>
    </div>
  </div>
</main>

<div class="gallery">
  <div class="gscroll">
    <section class="sec">
      <h4 class="sh">最近使用的圖案</h4>
      <div class="gg">
        <svg><use href="#oval"/></svg><svg><use href="#txt"/></svg><svg><use href="#txv"/></svg><svg><use href="#line"/></svg><svg><use href="#arr"/></svg><svg><use href="#rect"/></svg><svg class="hot"><use href="#ell"/></svg><svg><use href="#rnd"/></svg><svg><use href="#tri"/></svg><svg><use href="#elb"/></svg><svg><use href="#ela"/></svg><svg><use href="#ra"/></svg>
        <svg><use href="#da"/></svg><svg><use href="#free"/></svg><svg><use href="#scr"/></svg><svg><use href="#arc"/></svg><svg><use href="#wav"/></svg><svg><use href="#lc"/></svg>
      </div>
    </section>
    <section class="sec sec-wide">
      <h4 class="sh">線條</h4>
      <div class="gg">
        <svg><use href="#line"/></svg><svg><use href="#arr"/></svg><svg><use href="#dbl"/></svg><svg><use href="#elb"/></svg><svg><use href="#ela"/></svg><svg><use href="#eld"/></svg><svg><use href="#crv"/></svg><svg><use href="#cra"/></svg><svg><use href="#cra"/></svg><svg><use href="#wav"/></svg><svg><use href="#free"/></svg><svg><use href="#scr"/></svg>
      </div>
    </section>
    <section class="sec">
      <h4 class="sh">矩形</h4>
      <div class="gg">
        <svg><use href="#rect"/></svg><svg><use href="#rnd"/></svg><svg><use href="#snip"/></svg><svg><use href="#rnd2"/></svg><svg><use href="#snp2"/></svg><svg><use href="#rnd1"/></svg><svg><use href="#rect"/></svg><svg><use href="#rnd3"/></svg><svg><use href="#snp3"/></svg>
      </div>
    </section>
    <section class="sec sec-flush">
      <h4 class="sh">基本圖案</h4>
      <div class="gg">
        <svg><use href="#txt"/></svg><svg><use href="#txv"/></svg><svg><use href="#ell"/></svg><svg><use href="#tri"/></svg><svg><use href="#rtri"/></svg><svg><use href="#para"/></svg><svg><use href="#trap"/></svg><svg><use href="#dia"/></svg><svg><use href="#pgn"/></svg><svg><use href="#hex"/></svg><svg><use href="#n7"/></svg><svg><use href="#n8"/></svg>
        <svg><use href="#n8"/></svg><svg><use href="#n12"/></svg><svg><use href="#pie"/></svg><svg><use href="#cho"/></svg><svg><use href="#tear"/></svg><svg><use href="#frm"/></svg><svg><use href="#half"/></svg><svg><use href="#corner"/></svg><svg><use href="#pen"/></svg><svg><use href="#plus"/></svg><svg><use href="#oct"/></svg><svg><use href="#can"/></svg>
        <svg><use href="#cube"/></svg><svg><use href="#bev"/></svg><svg><use href="#donut"/></svg><svg><use href="#spir"/></svg><svg><use href="#arch"/></svg><svg><use href="#fold"/></svg><svg><use href="#smile"/></svg><svg><use href="#heart"/></svg><svg><use href="#bolt"/></svg><svg><use href="#sun"/></svg><svg><use href="#moon"/></svg><svg><use href="#cloud"/></svg>
        <svg><use href="#arc"/></svg><svg><use href="#lb"/></svg><svg><use href="#rb"/></svg><svg><use href="#bc"/></svg><svg><use href="#lb"/></svg><svg><use href="#rb"/></svg><svg><use href="#lc"/></svg><svg><use href="#rc"/></svg>
      </div>
    </section>
    <section class="sec">
      <h4 class="sh">箭號圖案</h4>
      <div class="gg">
        <svg><use href="#ra"/></svg><svg><use href="#la"/></svg><svg><use href="#ua"/></svg><svg><use href="#da"/></svg><svg><use href="#lra"/></svg><svg><use href="#uda"/></svg><svg><use href="#qua"/></svg><svg><use href="#qua"/></svg><svg><use href="#bent"/></svg><svg><use href="#uturn"/></svg><svg><use href="#bent"/></svg><svg><use href="#bent"/></svg>
        <svg><use href="#cca"/></svg><svg><use href="#cca"/></svg><svg><use href="#cua"/></svg><svg><use href="#cua"/></svg><svg><use href="#ra"/></svg><svg><use href="#ra"/></svg><svg><use href="#pent"/></svg><svg><use href="#chev"/></svg><svg><use href="#rcal"/></svg><svg><use href="#dcal"/></svg><svg><use href="#lcal"/></svg><svg><use href="#ucal"/></svg>
        <svg><use href="#lrcal"/></svg><svg><use href="#qcal"/></svg><svg><use href="#uturn"/></svg>
      </div>
    </section>
    <section class="sec sec-wide">
      <h4 class="sh">方程式圖案</h4>
      <div class="gg">
        <svg><use href="#plus"/></svg><svg><use href="#minus"/></svg><svg><use href="#mult"/></svg><svg><use href="#div"/></svg><svg><use href="#eq"/></svg><svg><use href="#neq"/></svg>
      </div>
    </section>
    <section class="sec sec-flush">
      <h4 class="sh">流程圖</h4>
      <div class="gg">
        <svg><use href="#rect"/></svg><svg><use href="#rnd"/></svg><svg><use href="#fdia"/></svg><svg><use href="#para"/></svg><svg><use href="#fpr"/></svg><svg><use href="#fst"/></svg><svg><use href="#doc"/></svg><svg><use href="#mdoc"/></svg><svg><use href="#term"/></svg><svg><use href="#ell"/></svg><svg><use href="#mi"/></svg><svg><use href="#ml"/></svg>
        <svg><use href="#oval"/></svg><svg><use href="#fst"/></svg><svg><use href="#snp2"/></svg><svg><use href="#c1"/></svg><svg><use href="#sj"/></svg><svg><use href="#or"/></svg><svg><use href="#col"/></svg><svg><use href="#srt"/></svg><svg><use href="#tri"/></svg><svg><use href="#mrg"/></svg><svg><use href="#sto"/></svg><svg><use href="#dly"/></svg>
        <svg><use href="#mag"/></svg><svg><use href="#dsk"/></svg><svg><use href="#dis"/></svg><svg><use href="#oval"/></svg>
      </div>
    </section>
    <section class="sec">
      <h4 class="sh">星星及緞帶</h4>
      <div class="gg">
        <svg><use href="#b1"/></svg><svg><use href="#b2"/></svg><svg><use href="#s4"/></svg><svg><use href="#s5"/></svg><svg><use href="#s6"/></svg><svg><use href="#s8"/></svg><svg><use href="#ring"/></svg><svg><use href="#ring"/></svg><svg><use href="#ring2"/></svg><svg><use href="#ring2"/></svg><svg><use href="#ring2"/></svg><svg><use href="#ring2"/></svg>
        <svg><use href="#rib"/></svg><svg><use href="#rib2"/></svg><svg><use href="#rib"/></svg><svg><use href="#rib2"/></svg><svg><use href="#scro"/></svg><svg><use href="#scrh"/></svg><svg><use href="#wave2"/></svg><svg><use href="#wave3"/></svg>
      </div>
    </section>
    <section class="sec">
      <h4 class="sh">圖說文字</h4>
      <div class="gg">
        <svg><use href="#c1"/></svg><svg><use href="#c2"/></svg><svg><use href="#c3"/></svg><svg><use href="#c4"/></svg><svg><use href="#c5"/></svg><svg><use href="#c6"/></svg><svg><use href="#c7"/></svg><svg><use href="#c8"/></svg><svg><use href="#c9"/></svg><svg><use href="#c10"/></svg><svg><use href="#c8"/></svg><svg><use href="#c9"/></svg>
        <svg><use href="#c10"/></svg><svg><use href="#c5"/></svg><svg><use href="#c6"/></svg><svg><use href="#c7"/></svg>
      </div>
    </section>
    <section class="sec">
      <h4 class="sh">動作按鈕</h4>
      <div class="gg">
        <svg><use href="#a1"/></svg><svg><use href="#a2"/></svg><svg><use href="#a3"/></svg><svg><use href="#a4"/></svg><svg><use href="#a5"/></svg><svg><use href="#a6"/></svg><svg><use href="#a7"/></svg><svg><use href="#a8"/></svg><svg><use href="#a9"/></svg><svg><use href="#a10"/></svg><svg><use href="#a11"/></svg><svg><use href="#a12"/></svg>
      </div>
    </section>
  </div>
  <svg class="grip" viewBox="0 0 8 8"><path d="M6 1h1v1H6zM4 3h1v1H4zM6 3h1v1H6zM2 5h1v1H2zM4 5h1v1H4zM6 5h1v1H6z"/></svg>
</div>

<svg class="pointer" viewBox="0 0 54 88"><path d="M48 84L6 8"/><path class="pointer-head" d="M1 1L0 17 16 8z"/></svg>
</body>
</html>
```
FILE: styles.css
```css
* { box-sizing: border-box; }
html, body { margin: 0; height: 100%; }
body {
  width: 1024px;
  height: 532px;
  overflow: hidden;
  position: relative;
  display: flex;
  flex-direction: column;
  background: #666;
  font-family: "Noto Sans CJK TC", "Noto Sans", sans-serif;
  font-size: 8.5px;
  color: #505050;
}
.defs { display: none; }

/* tab strip */
.tabs {
  flex: 0 0 26px;
  display: flex;
  align-items: flex-end;
  background: #444;
  position: relative;
  overflow: hidden;
  filter: blur(.35px);
}
.tab {
  height: 22px;
  padding: 0 7.5px;
  line-height: 21px;
  color: #c6c6c6;
  white-space: nowrap;
}
.tab-file { margin-left: -3.5px; margin-right: 6px; }
.tab-on { background: #ababab; color: #5a5a5a; }
.tab-gap { margin-left: 1.5px; margin-right: 1px; }
.tab-ctx { background: #3a3a3a; margin-left: 1px; height: 26px; line-height: 29px; }
.bulb {
  width: 12px;
  height: 16px;
  margin: 0 0 3px 9px;
  fill: none;
  stroke: #ddd;
  stroke-width: 1.2;
}
.tell { height: 22px; line-height: 21px; margin-left: 7px; color: #c6c6c6; white-space: nowrap; }
.deco { position: absolute; right: 0; top: 0; width: 300px; height: 26px; fill: #404040; }

/* ribbon */
.ribbon {
  flex: 0 0 66px;
  display: flex;
  background: #ababab;
  border-top: 1px solid #b8b8b8;
  filter: blur(.35px);
}
.group {
  display: flex;
  flex-direction: column;
  height: 65px;
  position: relative;
}
.group::after {
  content: "";
  position: absolute;
  right: 0;
  top: 3px;
  bottom: 3px;
  width: 1px;
  background: #989898;
}
.g1 { width: 32px; }
.g2 { width: 40px; }
.g3 { width: 131px; padding-left: 7px; }
.g4 { width: 167px; padding-left: 1px; }
.g5 { width: 86px; }
.g6 { width: 100px; padding-left: 7px; }
.g7 { width: 42px; }
.g8 { width: 210px; padding-left: 6px; }
.g9 { width: 71px; padding-left: 3px; }
.g10 { width: 100px; padding-left: 6px; }
.btns { display: flex; flex: 0 0 51px; }
.btn {
  height: 51px;
  display: flex;
  flex-direction: column;
  align-items: center;
  padding-top: 2px;
  flex: none;
}
.btn-on { background: #8e8e8e; }
.btn-off { color: #8a8a8a; }
.w24 { width: 24px; }
.w26 { width: 26px; }
.w28 { width: 28px; }
.w30 { width: 30px; }
.w34 { width: 34px; }
.w36 { width: 36px; }
.w40 { width: 40px; }
.w42 { width: 42px; }
.w44 { width: 44px; }
.w46 { width: 46px; }
.w56 { width: 56px; }
.ico { width: 26px; height: 24px; flex: none; }
.ico-s { width: 12px; height: 12px; flex: none; }
.lbl {
  display: block;
  text-align: center;
  line-height: 11px;
  white-space: nowrap;
}
.car {
  display: inline-block;
  width: 4px;
  height: 2px;
  vertical-align: middle;
  border-bottom: 1px solid #666;
}
.car-far { margin-left: 11px; }
.gtitle {
  text-align: center;
  line-height: 12px;
  white-space: nowrap;
}
.g1 .gtitle { text-align: left; width: 24px; }
.addins {
  flex: 0 0 51px;
  display: flex;
  flex-direction: column;
  gap: 8px;
  padding: 8px 0 0 9px;
}
.addin { display: flex; align-items: center; gap: 2px; height: 14px; white-space: nowrap; }
.ia { font: bold 8px "Liberation Sans", sans-serif; fill: #2e6bb0; }
.iw { font: italic bold 20px "Liberation Serif", serif; fill: #2e6bb0; }
.ih { font: bold 10px "Liberation Sans", sans-serif; fill: #24568f; }
.glyph {
  display: block;
  height: 24px;
  line-height: 24px;
  overflow: hidden;
  font-family: "DejaVu Serif", serif;
  font-weight: bold;
  font-size: 20px;
}
.glyph-pi { color: #24568f; }
.glyph-om { color: #8e8e8e; }

/* work area */
.work { flex: 1; display: flex; min-height: 0; }
.side {
  width: 157px;
  flex: none;
  display: flex;
  align-items: flex-start;
  gap: 7px;
  padding: 12px 0 0 3px;
  border-right: 1px solid #888;
}
.num { color: #d8d8d8; font-size: 10px; line-height: 11px; font-family: "Noto Sans", sans-serif; }
.thumb {
  width: 127px;
  height: 74px;
  background: #fff;
  border: 2px solid #bd8d85;
  display: flex;
  gap: 2px;
  padding: 23px 0 0 25px;
}
.tc {
  width: 28px;
  height: 28px;
  border-radius: 50%;
  display: flex;
  align-items: center;
  justify-content: center;
  color: #fff;
  font: 700 12px "Noto Sans", sans-serif;
}
.tc-g { background: #70ad47; }
.tc-y { background: #ffc000; }
.tc-b { background: #4472c4; }
.editor { flex: 1; padding: 6px 24px 0 71px; min-width: 0; }
.slide {
  height: 100%;
  background: #fff;
  display: flex;
  gap: 13px;
  padding: 143px 0 0 167px;
}
.shape {
  width: 174px;
  height: 174px;
  border-radius: 50%;
  flex: none;
  display: flex;
  align-items: center;
  justify-content: center;
  padding-top: 3px;
  color: #fff;
  font: 700 78px/1 "Noto Sans", sans-serif;
  position: relative;
}
.sh-g { background: #70ad47; }
.sh-y { background: #ffc000; }
.sh-b { background: #4472c4; }
.sel { position: absolute; inset: 0 0 0 -1px; border: 1px solid #c9c9c9; }
.rot {
  position: absolute;
  left: 50%;
  top: -33px;
  width: 19px;
  height: 19px;
  margin-left: -9px;
  fill: none;
  stroke: #8f8f8f;
  stroke-width: 1.6;
}
.stem { position: absolute; left: 50%; top: -14px; height: 14px; width: 1px; background: #c9c9c9; }
.h {
  position: absolute;
  width: 8px;
  height: 8px;
  border-radius: 50%;
  background: #fff;
  border: 1px solid #8a8a8a;
  margin: -4.5px 0 0 -4.5px;
}
.h-tl, .h-tc, .h-tr { top: 0; }
.h-ml, .h-mr { top: 50%; }
.h-bl, .h-bc, .h-br { top: 100%; }
.h-tl, .h-ml, .h-bl { left: 0; }
.h-tc, .h-bc { left: 50%; }
.h-tr, .h-mr, .h-br { left: 100%; }

/* shape gallery */
.gallery {
  position: absolute;
  left: 204px;
  top: 78px;
  width: 176px;
  height: 440px;
  background: #f0f0f0;
  border: 1px solid #d4d4d4;
  border-width: 0 1px 1px 0;
  box-shadow: 1px 1px 3px rgba(0, 0, 0, .25);
  filter: blur(.3px);
}
.gscroll { width: 163px; padding-top: 2px; }
.sec { padding-bottom: 1px; }
.sec-flush { padding-bottom: 0; }
.sec-wide { padding-bottom: 2px; }
.sec:first-child { padding-bottom: 0; }
.sh {
  margin: 0;
  height: 14px;
  line-height: 13px;
  padding-left: 7px;
  background: #e2e2e2;
  color: #666;
  font-size: 8.5px;
  font-weight: 400;
}
.gg {
  display: grid;
  grid-template-columns: repeat(12, 13.55px);
  grid-auto-rows: 14px;
}
.gg svg {
  width: 13.55px;
  height: 14px;
  padding: 1px;
  fill: #fafafa;
  stroke: #666;
  stroke-width: .85;
  overflow: visible;
}
.gg svg.hot { background: #b9b9b9; fill: #eee; }
.grip { position: absolute; right: 2px; bottom: 2px; width: 8px; height: 8px; fill: #aaa; }

/* annotation arrow */
.pointer {
  position: absolute;
  left: 299px;
  top: 111px;
  width: 54px;
  height: 88px;
  fill: none;
  stroke: #cb1f2b;
  stroke-width: 4;
  stroke-linecap: round;
}
.pointer-head { fill: #cb1f2b; stroke-linejoin: round; stroke-width: 1; }
```
